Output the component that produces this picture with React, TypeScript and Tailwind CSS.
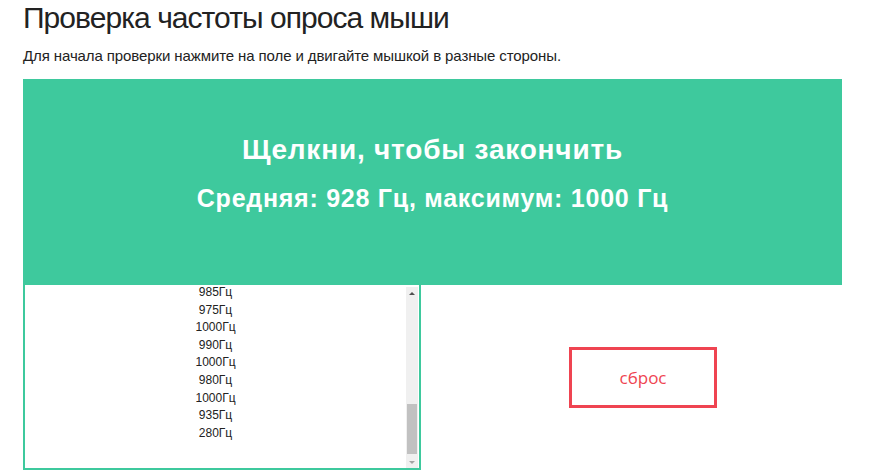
const rates = [985, 975, 1000, 990, 1000, 980, 1000, 935, 280];

function Scrollbar() {
  return (
    <div className="flex h-full w-[12px] flex-col bg-[#f0f0f0]">
      <div className="flex h-[13px] items-center justify-center">
        <div className="h-0 w-0 border-x-[3px] border-b-[3px] border-x-transparent border-b-[#505050]" />
      </div>
      <div className="flex flex-1 flex-col justify-end px-[1px] pb-[2px]">
        <div className="h-[50px] bg-[#c1c1c1]" />
      </div>
      <div className="flex h-[12px] items-center justify-center">
        <div className="h-0 w-0 border-x-[3px] border-t-[3px] border-x-transparent border-t-[#a3a3a3]" />
      </div>
    </div>
  );
}

export default function App() {
  return (
    <div className="h-[476px] w-[877px] overflow-hidden bg-white pl-[23px] font-['Liberation_Sans',Arial,sans-serif] text-[#222]">
      <h1 className="mt-[1px] text-[30px] leading-[34px] tracking-[-0.95px]">Проверка частоты опроса мыши</h1>
      <p className="mt-[11px] text-[15px] leading-[20px] tracking-[-0.1px]">
        Для начала проверки нажмите на поле и двигайте мышкой в разные стороны.
      </p>

      <div className="mt-[13px] flex h-[206px] w-[819px] flex-col items-center bg-[#3ec99d] pt-[56px] font-bold text-white">
        <div className="text-[28px] leading-[30px] tracking-[0.8px]">Щелкни, чтобы закончить</div>
        <div className="mt-[18px] text-[25px] leading-[30px] tracking-[0.75px]">Средняя: 928 Гц, максимум: 1000 Гц</div>
      </div>

      <div className="flex h-[185px]">
        <div className="flex w-[398px] border-x-2 border-b-2 border-t-0 border-[#3ec99d]">
          <div className="flex-1 overflow-hidden">
            <ul className="-mt-[1px] text-center text-[12px] leading-[17.6px] text-[#222]">
              {rates.map((r, i) => (
                <li key={i}>{r}Гц</li>
              ))}
            </ul>
          </div>
          <div className="pt-[2px]">
            <Scrollbar />
          </div>
          <div className="w-[1px] bg-white" />
        </div>

        <div className="flex flex-1 items-center pl-[148px]">
          <button className="flex h-[61px] w-[148px] items-center justify-center border-[3px] border-[#ef4451] bg-white font-['Open_Sans',sans-serif] text-[17px] text-[#ef4451]">
            сброс
          </button>
        </div>
      </div>
    </div>
  );
}
